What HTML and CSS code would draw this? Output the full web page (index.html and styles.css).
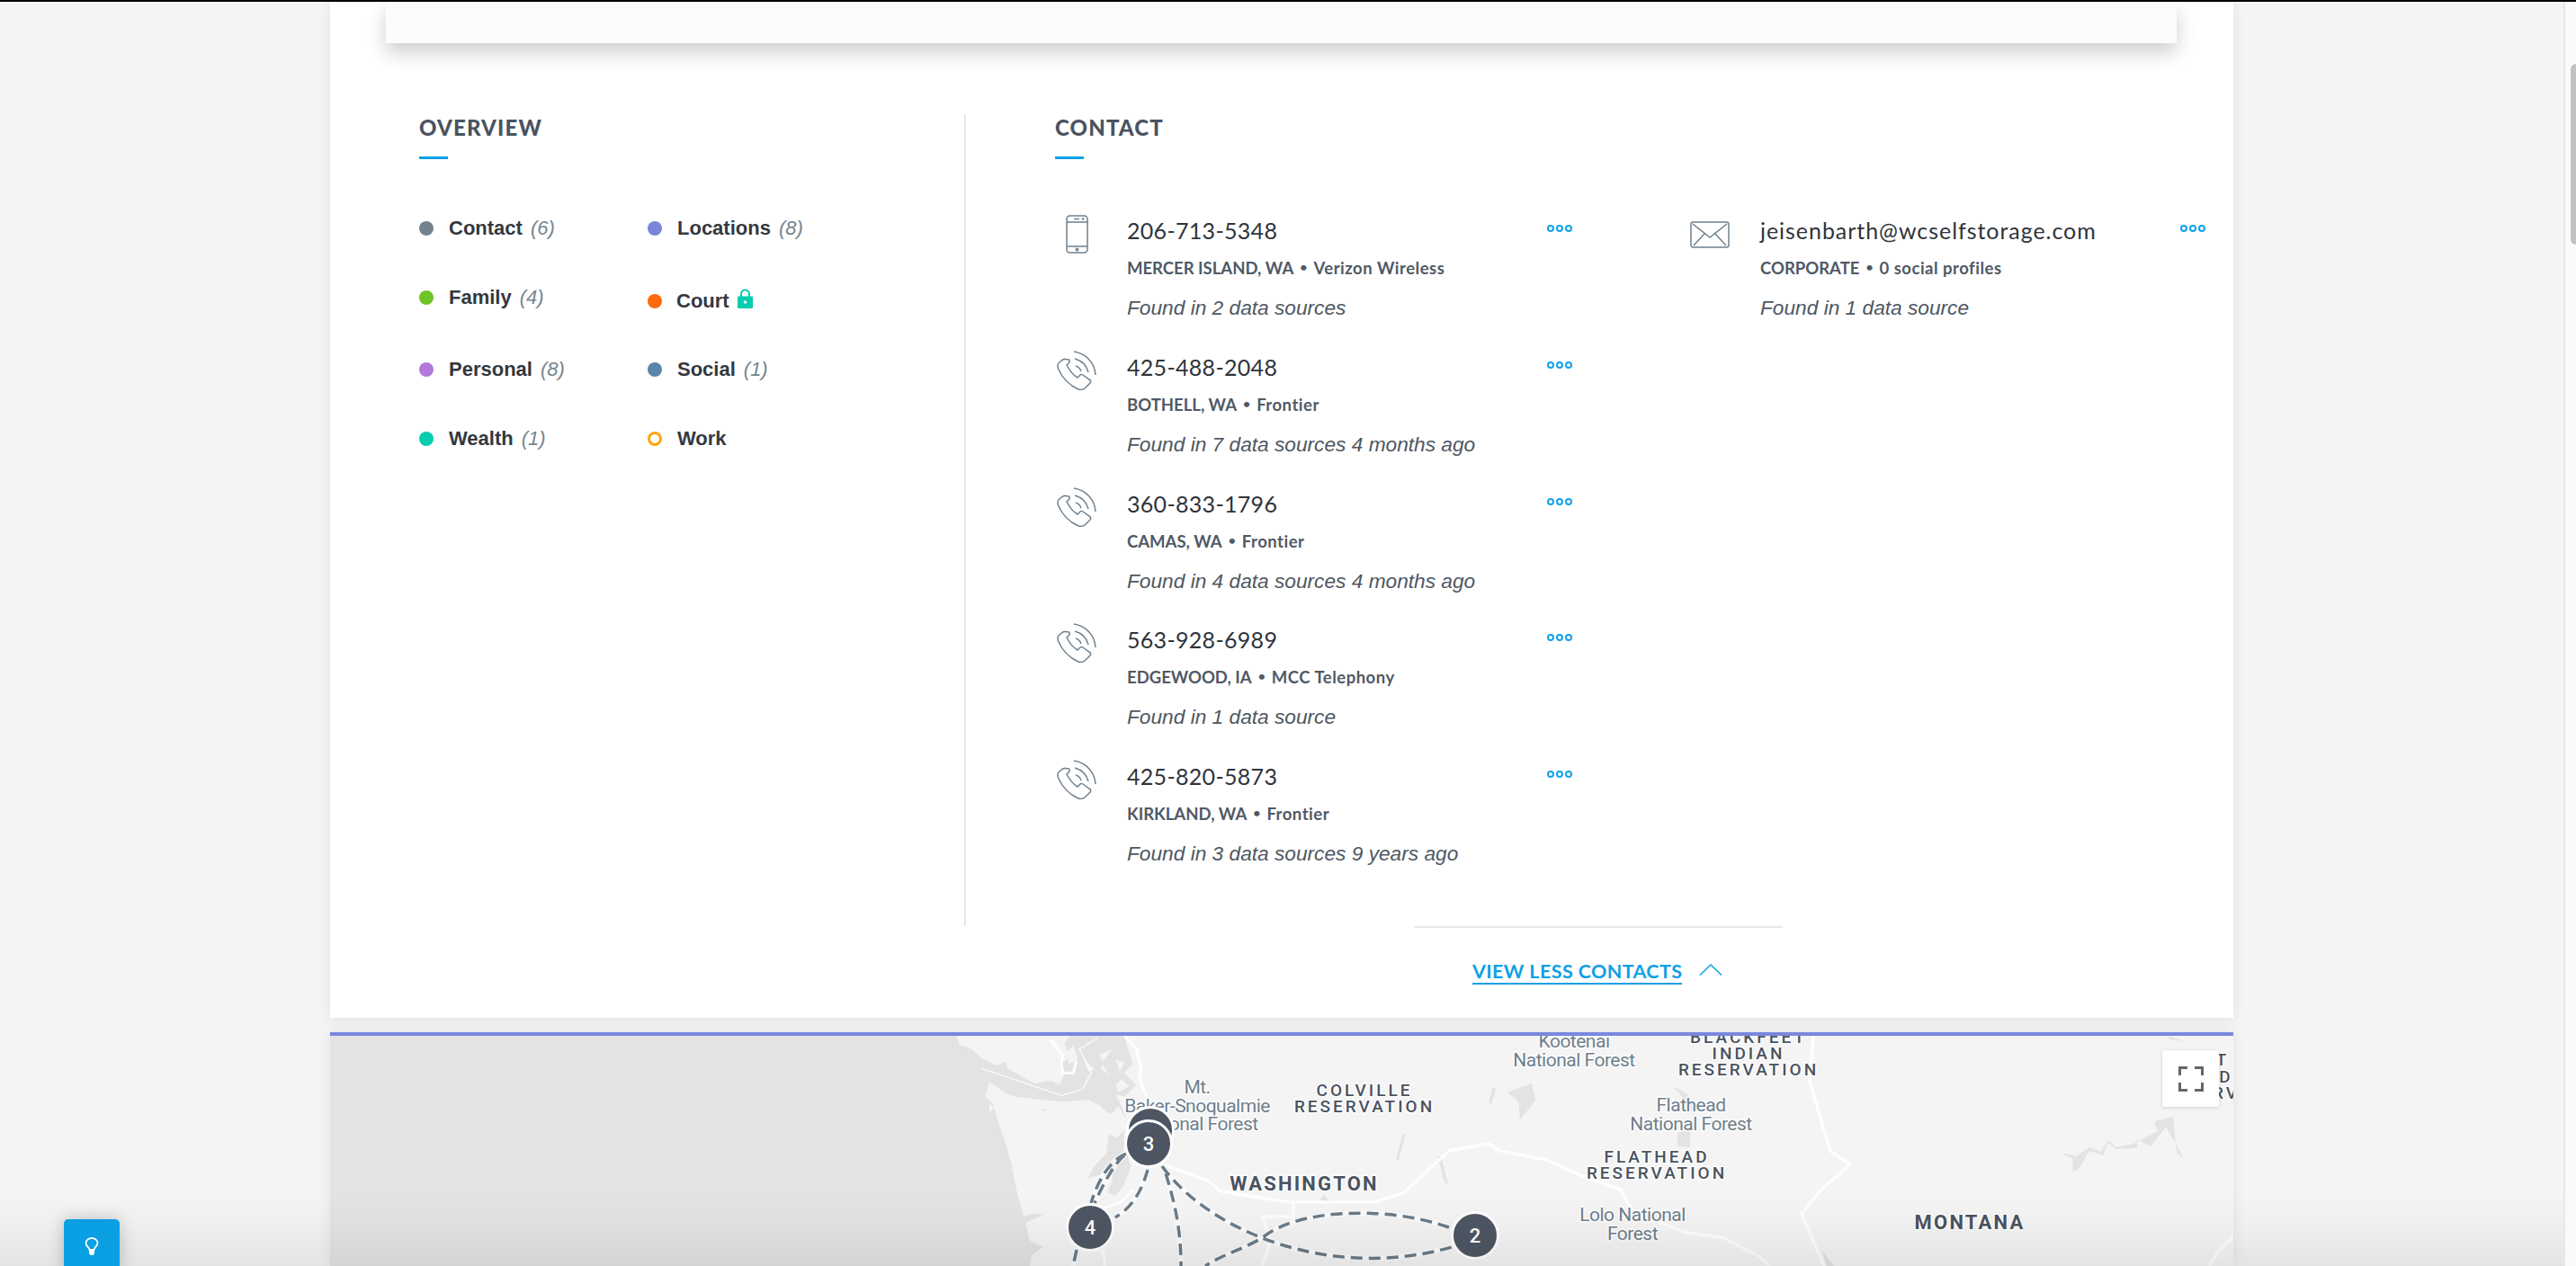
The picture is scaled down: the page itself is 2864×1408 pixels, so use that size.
FILE: index.html
```html
<!DOCTYPE html>
<html lang="en">
<head>
<meta charset="utf-8">
<title>Profile</title>
<link rel="stylesheet" href="styles.css">
</head>
<body>
<div class="topbar"></div>
<div class="page">
  <main class="main">
    <section class="panel">
      <div class="card"></div>
      <div class="columns">
        <div class="overview">
          <h2 class="heading">OVERVIEW</h2>
          <ul class="legend">
            <li class="legend-item"><i class="dot dot-contact"></i><b>Contact</b><em>(6)</em></li>
            <li class="legend-item"><i class="dot dot-locations"></i><b>Locations</b><em>(8)</em></li>
            <li class="legend-item"><i class="dot dot-family"></i><b>Family</b><em>(4)</em></li>
            <li class="legend-item legend-court"><i class="dot dot-court"></i><b>Court</b>
              <svg class="lock" viewBox="0 0 17 22"><path class="lock-body" d="M0 9.5a1 1 0 0 1 1-1h15a1 1 0 0 1 1 1V21a1 1 0 0 1-1 1H1a1 1 0 0 1-1-1z"/><path class="lock-loop" d="M4 9V6a4.500 4.500 0 0 1 9 0v3"/><circle class="lock-hole" cx="8.500" cy="15" r="1.800"/></svg>
            </li>
            <li class="legend-item"><i class="dot dot-personal"></i><b>Personal</b><em>(8)</em></li>
            <li class="legend-item"><i class="dot dot-social"></i><b>Social</b><em>(1)</em></li>
            <li class="legend-item"><i class="dot dot-wealth"></i><b>Wealth</b><em>(1)</em></li>
            <li class="legend-item"><i class="dot dot-work"></i><b>Work</b></li>
          </ul>
        </div>
        <div class="contact">
          <h2 class="heading">CONTACT</h2>
          <div class="contact-grid">
            <div class="contact-col">
              <article class="item">
                <div class="item-icon">
                  <svg class="icon-mobile" viewBox="0 0 25 43"><rect x="1" y="1" width="23" height="41" rx="3.500"/><path d="M1 8h23M1 35h23M9 4.500h6"/><circle cx="12.500" cy="38.500" r="1.200"/><circle cx="19" cy="4.500" r=".6"/></svg>
                </div>
                <div class="item-body">
                  <div class="item-title">206-713-5348</div>
                  <div class="item-sub">MERCER ISLAND, WA<span class="sep">•</span><span class="carrier">Verizon Wireless</span></div>
                  <div class="item-found">Found in 2 data sources</div>
                </div>
                <div class="more"><i></i><i></i><i></i></div>
              </article>
              <article class="item">
                <div class="item-icon">
                  <svg class="icon-phone" viewBox="0 0 44 44"><use href="#ring"/></svg>
                </div>
                <div class="item-body">
                  <div class="item-title">425-488-2048</div>
                  <div class="item-sub">BOTHELL, WA<span class="sep">•</span><span class="carrier">Frontier</span></div>
                  <div class="item-found">Found in 7 data sources 4 months ago</div>
                </div>
                <div class="more"><i></i><i></i><i></i></div>
              </article>
              <article class="item">
                <div class="item-icon">
                  <svg class="icon-phone" viewBox="0 0 44 44"><use href="#ring"/></svg>
                </div>
                <div class="item-body">
                  <div class="item-title">360-833-1796</div>
                  <div class="item-sub">CAMAS, WA<span class="sep">•</span><span class="carrier">Frontier</span></div>
                  <div class="item-found">Found in 4 data sources 4 months ago</div>
                </div>
                <div class="more"><i></i><i></i><i></i></div>
              </article>
              <article class="item">
                <div class="item-icon">
                  <svg class="icon-phone" viewBox="0 0 44 44"><use href="#ring"/></svg>
                </div>
                <div class="item-body">
                  <div class="item-title">563-928-6989</div>
                  <div class="item-sub">EDGEWOOD, IA<span class="sep">•</span><span class="carrier">MCC Telephony</span></div>
                  <div class="item-found">Found in 1 data source</div>
                </div>
                <div class="more"><i></i><i></i><i></i></div>
              </article>
              <article class="item">
                <div class="item-icon">
                  <svg class="icon-phone" viewBox="0 0 44 44"><use href="#ring"/></svg>
                </div>
                <div class="item-body">
                  <div class="item-title">425-820-5873</div>
                  <div class="item-sub">KIRKLAND, WA<span class="sep">•</span><span class="carrier">Frontier</span></div>
                  <div class="item-found">Found in 3 data sources 9 years ago</div>
                </div>
                <div class="more"><i></i><i></i><i></i></div>
              </article>
            </div>
            <div class="contact-col">
              <article class="item">
                <div class="item-icon">
                  <svg class="icon-mail" viewBox="0 0 44 30"><rect x="1" y="1" width="42" height="28" rx="2.500"/><path d="M3 3l19 15L41 3M4 27l12-13M40 27L28 14"/></svg>
                </div>
                <div class="item-body">
                  <div class="item-title item-title-mail">jeisenbarth@wcselfstorage.com</div>
                  <div class="item-sub">CORPORATE<span class="sep">•</span><span class="carrier">0 social profiles</span></div>
                  <div class="item-found">Found in 1 data source</div>
                </div>
                <div class="more"><i></i><i></i><i></i></div>
              </article>
            </div>
          </div>
        </div>
      </div>
      <div class="view-row">
        <div class="view-inner">
          <a class="view-link" href="#">VIEW LESS CONTACTS</a>
          <svg class="chevron" viewBox="0 0 26 13"><path d="M1 12.500L13 1l12 11.500"/></svg>
        </div>
      </div>
    </section>

    <section class="map">
      <svg class="map-svg" viewBox="367 1152 2116 256">
        <rect class="water" x="367" y="1152" width="684" height="256"/>
        <g transform="translate(1050 1150) scale(.33333)">
          <path class="water" d="M0 6L40 6 50 35 90 50 130 85 175 105 205 90 210 115 300 165 355 155 385 170 400 130 385 100 420 80 400 30 420 6H600L612 50 628 100 600 130 640 170 600 210 570 200 590 240 610 290 580 240 560 265 540 260 520 240 480 220 420 225 380 225 290 215 240 210 200 195 150 160 135 210 160 230 185 310 205 365 225 440 240 520 265 610 290 600 335 600 270 630 285 690 330 710 290 740 285 774H0Z"/>
          <path class="water" d="M600 320L575 345 548 335 540 400 500 440 478 482 520 470 540 440 562 480 545 530 572 540 600 500 622 445 610 400 590 430 600 370Z"/>
          <path class="land" d="M430 40L445 85 415 100 408 60ZM470 85L500 118 482 126 472 105ZM515 70L560 50 530 90ZM520 115L548 135 528 100ZM570 85L600 95 585 125ZM590 150L615 175 580 195 572 170ZM150 230L165 250 150 262Z"/>
          <path class="water" d="M320 255l20-6-4 10z"/>
          <path class="road-thin" d="M125 115L390 205 460 185 490 130 450 50 510 15"/>
          <path class="road-thick" d="M600 6L640 50 655 110 650 150 680 220M355 20L395 70 390 100 395 130 430 130 440 90M720 430L800 460 880 490 920 525 960 530M530 582L590 560 630 520M530 720L535 774"/>
        </g>
        <path class="water" d="M1694 1208L1703 1205 1707 1224 1690 1245 1688 1225 1676 1215Z"/>
        <path class="water" d="M2291 1283L2304 1288 2305 1303 2311 1300 2323 1280 2338 1285 2344 1271 2353 1278 2376 1277 2376 1267 2391 1275 2408 1253 2420 1273 2427 1287 2420 1282 2418 1263 2416 1242 2395 1247 2399 1258 2380 1268 2372 1272 2353 1276 2344 1268 2336 1281 2323 1276 2308 1286 2303 1284Z"/>
        <path class="water" d="M1660 1208l-5 18 3 2 5-16zM1560 1260l-8 30 3 1 7-28zM1860 1208l18 10 6 22-12-18zM1865 1260l14-6 0 22-14-1zM2410 1152l20 6-18-2z"/>
        <path class="water" d="M1598 1285l8 30 4 2-7-28zM1480 1340l-8-12-4 6zM2025 1390l14 18-8 0z"/>

        <path class="road" d="M1370 1327L1432 1337 1528 1337 1560 1327 1611 1280 1655 1272 1668 1280 1719 1290 1757 1307 1802 1323 1815 1347 1872 1370 1917 1377 1955 1397 1968 1408"/>
        <path class="road" d="M2016 1153L2012 1203 2035 1280 2057 1295 2025 1323 2003 1350 2016 1380 2028 1408"/>
        <path class="road" d="M1438 1337V1353H1403L1413 1380 1403 1408"/>
        <path class="road" d="M2483 1375L2466 1392 2456 1408"/>

        <path class="route-case" d="M1292 1297C1345 1370 1480 1425 1614 1387M1611 1365C1540 1340 1440 1345 1403 1377 1380 1390 1360 1395 1340 1408M1296 1305C1307 1340 1313 1370 1313 1408M1252 1283C1232 1292 1220 1315 1213 1338M1250 1285C1238 1295 1226 1318 1217 1338M1276 1301C1268 1330 1255 1345 1240 1354M1197 1390L1193 1408"/>
        <path class="route" d="M1292 1297C1345 1370 1480 1425 1614 1387M1611 1365C1540 1340 1440 1345 1403 1377 1380 1390 1360 1395 1340 1408M1296 1305C1307 1340 1313 1370 1313 1408M1252 1283C1232 1292 1220 1315 1213 1338M1250 1285C1238 1295 1226 1318 1217 1338M1276 1301C1268 1330 1255 1345 1240 1354M1197 1390L1193 1408"/>

        <text class="lbl-forest" x="1750" y="1165">Kootenai</text>
        <text class="lbl-forest" x="1750" y="1186">National Forest</text>
        <text class="lbl-res" x="1944" y="1160">BLACKFEET</text>
        <text class="lbl-res" x="1944" y="1178">INDIAN</text>
        <text class="lbl-res" x="1944" y="1196">RESERVATION</text>
        <text class="lbl-forest" x="1331" y="1216">Mt.</text>
        <text class="lbl-forest" x="1331" y="1237">Baker-Snoqualmie</text>
        <text class="lbl-forest" x="1331" y="1257">National Forest</text>
        <text class="lbl-res" x="1517" y="1219">COLVILLE</text>
        <text class="lbl-res" x="1517" y="1237">RESERVATION</text>
        <text class="lbl-forest" x="1880" y="1236">Flathead</text>
        <text class="lbl-forest" x="1880" y="1257">National Forest</text>
        <text class="lbl-res" x="1842" y="1293">FLATHEAD</text>
        <text class="lbl-res" x="1842" y="1311">RESERVATION</text>
        <text class="lbl-forest" x="1815" y="1358">Lolo National</text>
        <text class="lbl-forest" x="1815" y="1379">Forest</text>
        <text class="lbl-state" x="1450" y="1324">WASHINGTON</text>
        <text class="lbl-state" x="2190" y="1367">MONTANA</text>
        <text class="lbl-res" x="2471" y="1185">T</text>
        <text class="lbl-res" x="2475" y="1204">D</text>
        <text class="lbl-res" x="2475" y="1222">RV</text>

        <circle class="pin" cx="1279" cy="1257" r="25.500"/>
        <circle class="pin" cx="1277" cy="1272" r="25.500"/>
        <text class="pin-num" x="1277" y="1280">3</text>
        <circle class="pin" cx="1212" cy="1365" r="25.500"/>
        <text class="pin-num" x="1212" y="1373">4</text>
        <circle class="pin" cx="1640" cy="1374" r="25.500"/>
        <text class="pin-num" x="1640" y="1382">2</text>
      </svg>
      <button class="fullscreen" type="button" aria-label="Full screen">
        <svg viewBox="0 0 28 28"><path d="M1.500 10V1.500H10M18 1.500H26.500V10M26.500 18V26.500H18M10 26.500H1.500V18"/></svg>
      </button>
    </section>
    <div class="shade"></div>
    <button class="help" type="button" aria-label="Tips">
      <svg viewBox="0 0 16 20"><path class="bulb-glass" d="M5.500 14C5 11 1.500 10 1.500 6.500a6.500 5.500 0 0 1 13 0C14.500 10 11 11 10.500 14z"/><path class="bulb-base" d="M5 14h6v3a3 3 0 0 1-6 0z"/></svg>
    </button>
  </main>
  <aside class="scrollbar"><div class="thumb"></div></aside>
</div>
<svg class="defs" width="0" height="0">
  <symbol id="ring" viewBox="0 0 44 44">
    <path d="M4 12C1 14 0 17 2 21 6 30 13 38 24 43 27 44 30 43 32 41L37 36C38 35 38 33 36 32L29 27C27.500 26 26 26.500 25 28L23 30C18 27 14 22 11 16L13 14C14.500 13 14.500 11 13.500 10L10 9.500C8 9 6 10 4 12Z"/>
    <path d="M19 1C32 3 42 13 43 27M20 9C27 11 33 16 35 24M21 17C24 18 26 20 27 23"/>
  </symbol>
</svg>
</body>
</html>
```

FILE: styles.css
```css
* { box-sizing: border-box; }
html, body { margin: 0; padding: 0; }
body {
  width: 2864px;
  height: 1408px;
  overflow: hidden;
  background: #f4f4f4;
  font-family: "Liberation Sans", Arial, sans-serif;
}
.topbar { height: 2px; background: #000; }
.page { display: flex; height: 1406px; }
.main { position: relative; width: 2850px; height: 1406px; overflow: hidden; }
.defs { position: absolute; }

.panel {
  width: 2116px;
  height: 1130px;
  margin: 0 auto;
  background: #fff;
  box-shadow: 0 2px 14px rgba(0, 0, 0, .08);
}
.card {
  height: 46px;
  margin: 0 63px 0 62px;
  background: #fcfcfc;
  box-shadow: 0 10px 22px rgba(0, 0, 0, .2);
}
.columns { display: flex; height: 903px; margin-top: 79px; }
.overview {
  width: 707px;
  padding-left: 99px;
  border-right: 2px solid #e8e8e8;
}
.contact { flex: 1; padding-left: 99px; }
.heading {
  position: relative;
  margin: 0;
  height: 50px;
  padding-top: 1px;
  font: 900 24px/28px Lato, sans-serif;
  color: #4a5360;
  letter-spacing: 1.150px;
}
.heading::after {
  content: "";
  position: absolute;
  left: 0;
  top: 47px;
  width: 32px;
  height: 3px;
  background: #0fa0e6;
}

.legend {
  display: grid;
  grid-template-columns: 254px 1fr;
  grid-template-rows: 77px 80px 77px 34px;
  margin: 60px 0 0;
  padding: 0;
  list-style: none;
}
.legend-item {
  display: flex;
  align-items: center;
  height: 34px;
  font-size: 22px;
  color: #33383f;
}
.legend-item b { margin-left: 17px; font-weight: 700; }
.legend-item em { margin-left: 9px; color: #75858f; }
.legend-court { margin-top: 4px; }
.legend-court b { margin-left: 16px; }
.dot { flex: none; width: 16px; height: 16px; border-radius: 50%; }
.dot-contact { background: #71838f; }
.dot-locations { background: #7b86d9; }
.dot-family { background: #6ec424; }
.dot-court { background: #ff6a0d; }
.dot-personal { background: #b478dc; }
.dot-social { background: #5b85ab; }
.dot-wealth { background: #06cdb0; }
.dot-work { background: #fff; border: 3px solid #ffa60d; }
.lock { width: 17px; height: 22px; margin: -6px 0 0 9px; }
.lock-body { fill: #06cdb0; }
.lock-loop { fill: none; stroke: #06cdb0; stroke-width: 2; }
.lock-hole { fill: #fff; }

.contact-grid { display: grid; grid-template-columns: 704px 1fr; margin-top: 62px; }
.item { position: relative; display: flex; width: 575px; height: 151.750px; }
.item-icon { flex: none; width: 48px; display: flex; justify-content: center; }
.item-icon svg { fill: none; stroke: #6f818f; stroke-width: 1.500; }
.icon-mobile { width: 25px; height: 43px; }
.icon-phone { width: 44px; height: 44px; margin-top: -1px; }
.icon-mail { width: 44px; height: 30px; margin-top: 7px; }
.item-body { flex: 1; margin-left: 32px; }
.item-title {
  font: 400 25px/34px Lato, sans-serif;
  letter-spacing: .3px;
  color: #2f343b;
  white-space: nowrap;
}
.item-title-mail { letter-spacing: .95px; }
.item-sub {
  margin-top: 11px;
  font: 700 18.500px/28px Lato, sans-serif;
  color: #505965;
  white-space: nowrap;
}
.sep { margin: 0 7px; font-size: 14px; position: relative; top: -3px; }
.carrier { letter-spacing: .5px; }
.item-found {
  margin-top: 14px;
  font: italic 400 22.700px/28px "Liberation Sans", Arial, sans-serif;
  color: #4e5762;
  white-space: nowrap;
}
.more { display: flex; gap: 2px; height: 8px; margin-top: 11px; }
.more i {
  width: 8px;
  height: 8px;
  border: 2px solid #12a2e8;
  border-radius: 50%;
}

.view-row { display: flex; justify-content: flex-end; }
.view-inner {
  display: flex;
  align-items: flex-start;
  width: 410px;
  height: 100px;
  margin-right: 501px;
  padding: 36px 0 0 65px;
  border-top: 2px solid #e8e8e8;
}
.view-link {
  font: 700 21.500px/25px Lato, sans-serif;
  letter-spacing: .4px;
  color: #0fa0e6;
  text-decoration: none;
  border-bottom: 2px solid #0fa0e6;
  white-space: nowrap;
}
.chevron { flex: none; width: 26px; height: 13px; margin: 4px 0 0 19px; fill: none; stroke: #0fa0e6; stroke-width: 1.500; }

.map {
  position: relative;
  width: 2116px;
  height: 260px;
  margin: 16px auto 0;
  overflow: hidden;
  border-top: 4px solid #7987de;
  background: #f4f4f4;
  box-shadow: 0 0 14px rgba(0, 0, 0, .08);
}
.map-svg { display: block; width: 2116px; height: 256px; }
.water { fill: #e3e3e3; }
.land { fill: #f4f4f4; }
.road { fill: none; stroke: #fff; stroke-width: 3.500; stroke-opacity: .85; stroke-linejoin: round; }
.road-thick { fill: none; stroke: #fff; stroke-width: 10; stroke-opacity: .85; stroke-linejoin: round; }
.road-thin { fill: none; stroke: #fff; stroke-width: 4; stroke-opacity: .85; stroke-linejoin: round; }
.route-case { fill: none; stroke: #fff; stroke-width: 6; opacity: .6; }
.route { fill: none; stroke: #6a7b89; stroke-width: 3.500; stroke-dasharray: 13 7; }
.lbl-forest, .lbl-res, .lbl-state {
  text-anchor: middle;
  paint-order: stroke;
  stroke: #fff;
  stroke-opacity: .85;
  stroke-width: 3px;
  stroke-linejoin: round;
  font-family: Roboto, sans-serif;
}
.lbl-forest { font-size: 21px; letter-spacing: -.5px; fill: #6f7f8c; }
.lbl-res { font-size: 19px; font-weight: 500; letter-spacing: 3px; fill: #4a5360; }
.lbl-state { font-size: 22px; font-weight: 700; letter-spacing: 2.200px; fill: #4a5360; }
.pin { fill: #4e5663; stroke: #fff; stroke-width: 3; }
.pin-num { text-anchor: middle; font: 500 22px Roboto, sans-serif; fill: #fff; }
.fullscreen {
  position: absolute;
  left: 2037px;
  top: 16px;
  display: flex;
  align-items: center;
  justify-content: center;
  width: 63px;
  height: 63px;
  padding: 0;
  border: 0;
  border-radius: 3px;
  background: #fff;
  box-shadow: 0 1px 4px rgba(0, 0, 0, .15);
}
.fullscreen svg { width: 28px; height: 28px; fill: none; stroke: #666; stroke-width: 3; }

.shade {
  position: absolute;
  left: 0;
  right: 0;
  bottom: 0;
  height: 80px;
  pointer-events: none;
  background: linear-gradient(to bottom, rgba(0, 0, 0, 0), rgba(0, 0, 0, .02) 40%, rgba(0, 0, 0, .065));
}
.help {
  position: absolute;
  left: 71px;
  bottom: -10px;
  width: 62px;
  height: 62px;
  padding: 20px 0 0;
  border: 0;
  border-radius: 5px 5px 0 0;
  background: #0a9fe3;
  box-shadow: 0 0 18px rgba(0, 0, 0, .22);
  display: flex;
  justify-content: center;
  align-items: flex-start;
}
.help svg { width: 16px; height: 20px; }
.bulb-glass { fill: none; stroke: #fff; stroke-width: 1.800; }
.bulb-base { fill: #fff; }

.scrollbar { flex: none; width: 14px; border-left: 2px solid #e8e8e8; background: #fafafa; padding: 69px 0 0 6px; }
.thumb { height: 201px; border-radius: 6px 0 0 6px; background: #c2c2c2; }
```
